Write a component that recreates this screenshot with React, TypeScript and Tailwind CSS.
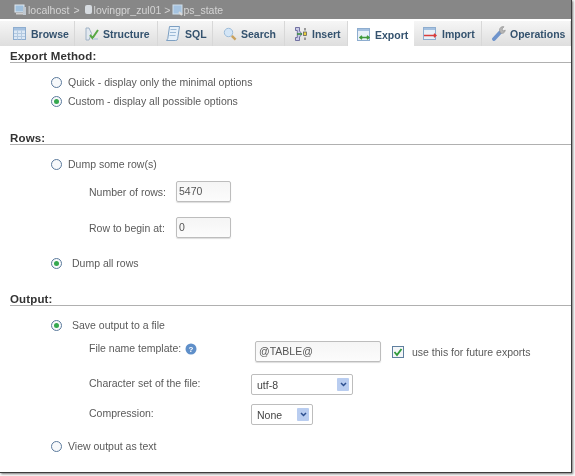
import React from "react";

const Radio = ({ on }: { on?: boolean }) => (
  <span className="flex h-[11px] w-[11px] shrink-0 items-center justify-center rounded-full border border-[#5b7a9c] bg-[#f7f9fb]">
    {on && <span className="h-[5px] w-[5px] rounded-full bg-[#35a84f]" />}
  </span>
);

const Browse = () => (
  <svg width="13" height="13" viewBox="0 0 13 13">
    <rect x="0.500" y="0.500" width="12" height="12" fill="#dce8f5" stroke="#8eadcf" />
    <rect x="1" y="1" width="11" height="2.500" fill="#a5c1e0" />
    <path d="M4.500 3.500v9M8.500 3.500v9M1 6.500h11M1 9.500h11" stroke="#b3c9e0" />
  </svg>
);
const Structure = () => (
  <svg width="14" height="14" viewBox="0 0 14 14">
    <path d="M1 1h3l2.500 5.500L4 13H1z" fill="#e2e9f0" stroke="#9fb2c5" />
    <path d="M5 8l2.500 3L13 3" fill="none" stroke="#58a845" strokeWidth="2" />
    <path d="M8 11h5v2H8z" fill="#c4d2e0" />
  </svg>
);
const Sql = () => (
  <svg width="14" height="15" viewBox="0 0 14 15">
    <path d="M3.500 0.500h10l-1.800 12a2 2 0 0 1-2 2H0.500l1.300-2z" fill="#e6f0f9" stroke="#7c9fc2" />
    <path d="M4.500 3.500h6M4 6.500h6M3.500 9.500h6" stroke="#9dbad6" />
  </svg>
);
const Search = () => (
  <svg width="14" height="14" viewBox="0 0 14 14">
    <circle cx="5.500" cy="5.500" r="4.200" fill="#d3e5f6" stroke="#9dbcd9" />
    <path d="M8.800 8.800l3.800 3.800" stroke="#c9a25f" strokeWidth="2.400" />
  </svg>
);
const Insert = () => (
  <svg width="12" height="14" viewBox="0 0 12 14">
    <path d="M0.500 0.500h4v3.500L7 7l-2.500 3v3.500h-4v-3h1.800V3.500H0.500z" fill="#c9c9e6" stroke="#57578f" strokeWidth="0.800" />
    <path d="M2 7h5" stroke="#3b8f45" strokeWidth="1.600" />
    <rect x="8.500" y="5" width="3" height="3.500" fill="#eccf3e" stroke="#555" strokeWidth="0.700" />
    <path d="M10 1v2.500M10 10.500V13" stroke="#555" strokeWidth="1.100" />
  </svg>
);
const Sheet = ({ arrow, d }: { arrow: string; d: string }) => (
  <svg width="14" height="14" viewBox="0 0 14 14">
    <rect x="0.500" y="0.500" width="12" height="12" fill="#e8f0f8" stroke="#8eadcf" />
    <rect x="1" y="1" width="11" height="2" fill="#a5c1e0" />
    <path d={d} fill="none" stroke={arrow} strokeWidth="1.500" />
  </svg>
);
const Wrench = () => (
  <svg width="14" height="15" viewBox="0 0 14 15">
    <path d="M2 13l6-6.500" stroke="#6f94cc" strokeWidth="3.800" strokeLinecap="round" />
    <path d="M7.500 4a3.400 3.400 0 0 1 4.500-3.200L10 3l1 2 2.300-.8a3.400 3.400 0 0 1-5 2.800z" fill="#b7b7b7" stroke="#8c8c8c" strokeWidth="0.600" />
  </svg>
);

const tabs: { label: string; icon: React.ReactNode; w: string; pad: string; on?: boolean }[] = [
  { label: "Browse", icon: <Browse />, w: "w-[75px]", pad: "pl-[13px] gap-[5px]" },
  { label: "Structure", icon: <Structure />, w: "w-[83px]", pad: "pl-[10px] gap-[4px]" },
  { label: "SQL", icon: <Sql />, w: "w-[55px]", pad: "pl-[8px] gap-[5px]" },
  { label: "Search", icon: <Search />, w: "w-[72px]", pad: "pl-[10px] gap-[4px]" },
  { label: "Insert", icon: <Insert />, w: "w-[63px]", pad: "pl-[10px] gap-[5px]" },
  { label: "Export", icon: <Sheet arrow="#3f9a3a" d="M3 9.500h9M5 7.700l-2 1.800 2 1.800M10 7.700l2 1.800-2 1.800" />, w: "w-[66px]", pad: "pl-[9px] gap-[4px]", on: true },
  { label: "Import", icon: <Sheet arrow="#d83c3c" d="M1 8.500h12M11 6.700l2 1.800-2 1.800" />, w: "w-[68px]", pad: "pl-[9px] gap-[5px]" },
  { label: "Operations", icon: <Wrench />, w: "w-[89px]", pad: "pl-[10px] gap-[4px]" },
];

const Heading = ({ children, className }: { children: string; className: string }) => (
  <div className={`ml-[10px] border-b border-[#b0b0b0] text-[11.500px] leading-[12px] font-bold tracking-[0.150px] text-[#333] ${className}`}>
    {children}
  </div>
);

const Option = ({ label, on, wide, className }: { label: string; on?: boolean; wide?: boolean; className: string }) => (
  <label className={`ml-[51px] flex h-[14px] items-center ${wide ? "gap-[10px]" : "gap-[6px]"} ${className}`}>
    <Radio on={on} />
    <span>{label}</span>
  </label>
);

const Chevron = () => (
  <span className="flex h-[13px] w-[12px] items-center justify-center rounded-[1px] bg-[#b9cdf0]">
    <svg width="7" height="5" viewBox="0 0 7 5">
      <path d="M1 1l2.500 2.500L6 1" fill="none" stroke="#2d4f8f" strokeWidth="1.500" />
    </svg>
  </span>
);

const field = "rounded-[2px] border border-[#bdbdbd] bg-gradient-to-b from-[#f5f5f5] to-[#fcfcfc] h-[21px] px-[2px] leading-[19px] text-[#555] shadow-[0_1px_1px_#ddd]";
const select = "flex h-[21px] items-center justify-between rounded-[2px] border border-[#bdbdbd] bg-white pl-[5px] pr-[3px] text-[#444]";

export default function App() {
  return (
    <div className="h-[476px] w-[575px] overflow-hidden bg-[#f8f8f8] font-['Liberation_Sans',Arial,sans-serif] text-[10.500px] leading-[14px] text-[#5a5a5a] blur-[0.4px]">
      <div className="h-[473px] w-[572px] border-r-[1px] border-b-[1px] border-[#3c3c3c] bg-white shadow-[1px_1px_2px_#777]">
        <div className="flex h-[19px] items-center bg-[#878787] pl-[14px] text-[#d4d4d4]">
          <svg width="13" height="12" viewBox="0 0 13 12">
            <rect x="1" y="1" width="9" height="7" fill="#9fc0dd" stroke="#dfe8ef" />
            <rect x="9" y="3" width="3" height="8" fill="#c0c8d0" />
            <rect x="2" y="9" width="7" height="1.500" fill="#d0d0d0" />
          </svg>
          <span className="ml-[1px]">localhost</span>
          <span className="ml-[4px]">&gt;</span>
          <svg width="9" height="11" viewBox="0 0 9 11" className="ml-[4px]">
            <rect x="1" y="1" width="7" height="9" rx="2" fill="#d6dbe0" />
          </svg>
          <span className="ml-[1px]">lovingpr_zul01</span>
          <span className="ml-[3px]">&gt;</span>
          <svg width="11" height="12" viewBox="0 0 11 12" className="ml-[2px]">
            <rect x="1" y="1" width="9" height="9" fill="#a5c3e0" stroke="#cfdfec" />
            <path d="M7 8l3 3" stroke="#d9d9d9" strokeWidth="2" />
          </svg>
          <span>ps_state</span>
        </div>
        <div className="mt-[2px] flex h-[25px]">
          {tabs.map((t) => (
            <div
              key={t.label}
              className={`flex ${t.w} ${t.pad} items-center border-r border-[#d8d8d8] text-[10.500px] font-bold text-[#34526e] ${t.on ? "h-[27px] border-r-0 bg-white" : "bg-gradient-to-b from-[#f6f6f6] to-[#dedede]"}`}
            >
              {t.icon}
              <span>{t.label}</span>
            </div>
          ))}
        </div>
        <Heading className="mt-[4px]">Export Method:</Heading>
        <Option label="Quick - display only the minimal options" className="mt-[12px]" />
        <Option label="Custom - display all possible options" on className="mt-[5px]" />
        <Heading className="mt-[24px]">Rows:</Heading>
        <Option label="Dump some row(s)" className="mt-[12px]" />
        <div className="mt-[10px] ml-[89px] flex items-center">
          <span className="w-[87px]">Number of rows:</span>
          <div className={`${field} w-[55px]`}>5470</div>
        </div>
        <div className="mt-[15px] ml-[89px] flex items-center">
          <span className="w-[87px]">Row to begin at:</span>
          <div className={`${field} w-[55px]`}>0</div>
        </div>
        <Option label="Dump all rows" on wide className="mt-[18px]" />
        <Heading className="mt-[23px]">Output:</Heading>
        <Option label="Save output to a file" on wide className="mt-[12px]" />
        <div className="mt-[9px] ml-[89px] flex items-center">
          <div className="-mt-[1px] flex w-[166px] items-center gap-[4px] self-start">
            <span>File name template:</span>
            <svg width="12" height="12" viewBox="0 0 12 12" className="mt-[3px]">
              <circle cx="6" cy="6" r="5.500" fill="#5f8fc9" />
              <text x="6" y="9" textAnchor="middle" fontSize="8" fontWeight="bold" fill="#fff" fontFamily="Liberation Sans">?</text>
            </svg>
          </div>
          <div className={`${field} w-[126px] pl-[3px]`}>@TABLE@</div>
          <span className="ml-[11px] flex h-[12px] w-[12px] items-center justify-center border border-[#5f7f9f] bg-[#f4f6f8]">
            <svg width="10" height="10" viewBox="0 0 10 10">
              <path d="M1.500 5l2.500 3 4.500-6" fill="none" stroke="#2f9a3a" strokeWidth="1.800" />
            </svg>
          </span>
          <span className="ml-[8px]">use this for future exports</span>
        </div>
        <div className="mt-[12px] ml-[89px] flex items-center">
          <span className="-mt-[3px] w-[162px]">Character set of the file:</span>
          <div className={`${select} w-[102px]`}>
            <span>utf-8</span>
            <Chevron />
          </div>
        </div>
        <div className="mt-[9px] ml-[89px] flex items-center">
          <span className="-mt-[3px] w-[162px]">Compression:</span>
          <div className={`${select} w-[62px]`}>
            <span>None</span>
            <Chevron />
          </div>
        </div>
        <Option label="View output as text" className="mt-[14px]" />
      </div>
    </div>
  );
}
